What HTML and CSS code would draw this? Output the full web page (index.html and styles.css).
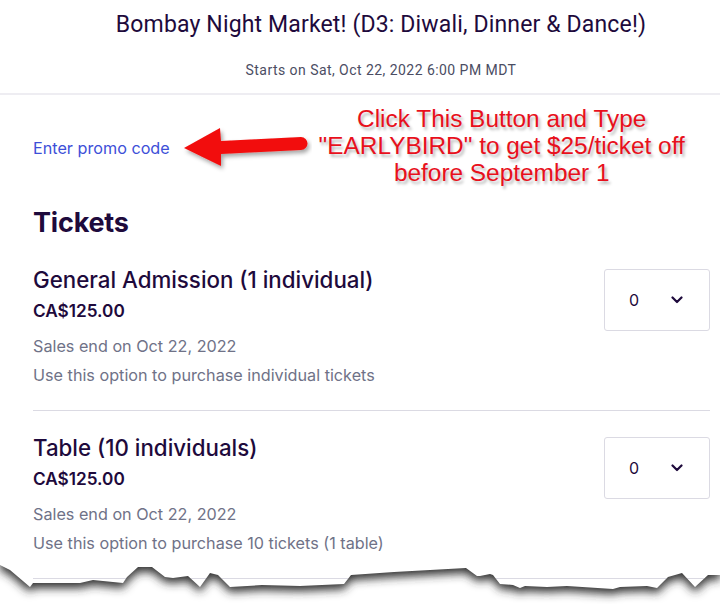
FILE: index.html
```html
<!DOCTYPE html>
<html lang="en">
<head>
<meta charset="utf-8">
<title>Bombay Night Market! - Tickets</title>
<link rel="stylesheet" href="styles.css">
</head>
<body>
<div class="page">
  <header class="event-header">
    <h1 class="event-title">Bombay Night Market! (D3: Diwali, Dinner &amp; Dance!)</h1>
    <p class="event-date">Starts on Sat, Oct 22, 2022 6:00 PM MDT</p>
  </header>

  <main class="content">
    <div class="promo-row">
      <a class="promo-link" href="#">Enter promo code</a>
      <svg class="arrow" width="130" height="50" viewBox="0 0 130 50" aria-hidden="true">
        <defs>
          <filter id="arrowShadow" x="-10%" y="-30%" width="130%" height="170%">
            <feGaussianBlur in="SourceAlpha" stdDeviation="2"/>
            <feOffset dx="2" dy="3" result="b"/>
            <feFlood flood-color="#000" flood-opacity="0.35"/>
            <feComposite in2="b" operator="in"/>
            <feMerge><feMergeNode/><feMergeNode in="SourceGraphic"/></feMerge>
          </filter>
        </defs>
        <g filter="url(#arrowShadow)">
          <path d="M2 25 L38 5 L39 18 L119 14 A6.5 6.5 0 0 1 119 27 L39 31 L39 43 Z" fill="#f20d0d"/>
        </g>
      </svg>
      <p class="annotation">Click This Button and Type<br>"EARLYBIRD" to get $25/ticket off<br>before September 1</p>
    </div>

    <h2 class="tickets-heading">Tickets</h2>

    <ul class="ticket-list">
      <li class="ticket">
        <div class="ticket-info">
          <h3 class="ticket-name">General Admission (1 individual)</h3>
          <p class="ticket-price">CA$125.00</p>
          <p class="ticket-meta ticket-sales">Sales end on Oct 22, 2022</p>
          <p class="ticket-meta ticket-desc">Use this option to purchase individual tickets</p>
        </div>
        <div class="qty-select">
          <span class="qty-value">0</span>
          <svg class="chevron" width="12" height="8" viewBox="0 0 12 8" aria-hidden="true"><path d="M1.5 1.5 L6 6 L10.5 1.5" fill="none" stroke="#1e0a3c" stroke-width="2.2" stroke-linecap="round" stroke-linejoin="round"/></svg>
        </div>
      </li>
      <li class="ticket">
        <div class="ticket-info">
          <h3 class="ticket-name">Table (10 individuals)</h3>
          <p class="ticket-price">CA$125.00</p>
          <p class="ticket-meta ticket-sales">Sales end on Oct 22, 2022</p>
          <p class="ticket-meta ticket-desc">Use this option to purchase 10 tickets (1 table)</p>
        </div>
        <div class="qty-select">
          <span class="qty-value">0</span>
          <svg class="chevron" width="12" height="8" viewBox="0 0 12 8" aria-hidden="true"><path d="M1.5 1.5 L6 6 L10.5 1.5" fill="none" stroke="#1e0a3c" stroke-width="2.2" stroke-linecap="round" stroke-linejoin="round"/></svg>
        </div>
      </li>
    </ul>

    <div class="torn-edge" aria-hidden="true">
      <svg width="720" height="52" viewBox="0 0 720 52">
        <defs>
          <clipPath id="below">
            <path d="M0 11 L10 16 L30 33 L33 29 L80 29 L93 26 L123 29 L127 23 L138 13 L152 13 L165 23 L173 24 L188 22 L200 33 L210 19 L218 21 L230 33 L262 31 L300 32 L344 30 L351 21 L394 18 L430 16 L466 14 L477 22 L480 22 L490 20 L493 21 L500 30 L513 31 L520 34 L525 32 L547 33 L567 32 L613 35 L620 33 L647 32 L657 34 L668 23 L682 19 L695 33 L708 21 L720 21 L720 52 L0 52 Z"/>
          </clipPath>
          <filter id="tearBlur" x="-5%" y="-50%" width="110%" height="200%">
            <feGaussianBlur stdDeviation="5"/>
          </filter>
        </defs>
        <g clip-path="url(#below)">
          <rect x="0" y="0" width="720" height="52" fill="#ffffff"/>
          <path filter="url(#tearBlur)" transform="translate(0 5)" fill="#2e2e2e" d="M0 -20 L0 11 L10 16 L30 33 L33 29 L80 29 L93 26 L123 29 L127 23 L138 13 L152 13 L165 23 L173 24 L188 22 L200 33 L210 19 L218 21 L230 33 L262 31 L300 32 L344 30 L351 21 L394 18 L430 16 L466 14 L477 22 L480 22 L490 20 L493 21 L500 30 L513 31 L520 34 L525 32 L547 33 L567 32 L613 35 L620 33 L647 32 L657 34 L668 23 L682 19 L695 33 L708 21 L720 21 L720 -20 Z"/>
        </g>
      </svg>
    </div>
  </main>
</div>
</body>
</html>
```

FILE: styles.css
```css
* {
  box-sizing: border-box;
}

html, body {
  margin: 0;
  padding: 0;
  background: #ffffff;
}

body {
  font-family: Inter, "Noto Sans", sans-serif;
  color: #1e0a3c;
  overflow: hidden;
}

.page {
  width: 720px;
  height: 604px;
  position: relative;
  overflow: hidden;
}

/* Header */
.event-header {
  height: 95px;
  border-bottom: 2px solid #eeedf2;
  display: flex;
  flex-direction: column;
  align-items: center;
  padding-top: 10px;
  padding-left: 42px;
}

.event-title {
  margin: 0;
  font-family: Roboto, "Liberation Sans", sans-serif;
  font-weight: 400;
  font-size: 23px;
  line-height: 30px;
  letter-spacing: 0.15px;
  color: #1e0a3c;
}

.event-date {
  margin: 21px 0 0;
  font-family: Roboto, "Liberation Sans", sans-serif;
  font-size: 14px;
  line-height: 18px;
  letter-spacing: 0.45px;
  color: #4b4d63;
}

/* Content */
.content {
  padding: 0 11px 0 33px;
}

.promo-row {
  display: flex;
  align-items: center;
  padding-top: 12px;
  height: 93px;
}

.promo-link {
  font-family: Inter, "Noto Sans", sans-serif;
  font-size: 16.2px;
  color: #3d4fd8;
  text-decoration: none;
  white-space: nowrap;
  margin-top: 1px;
}

.arrow {
  margin-left: 12px;
  flex: none;
}

.annotation {
  margin: -4px 0 0 4px;
  font-family: "Liberation Sans", Arial, sans-serif;
  font-size: 24.4px;
  line-height: 27px;
  color: #e8101c;
  text-align: center;
  text-shadow: 2px 3px 3px rgba(0, 0, 0, 0.28);
  white-space: nowrap;
  width: 372px;
}

.tickets-heading {
  margin: 19px 0 0;
  font-family: Inter, "Noto Sans", sans-serif;
  font-size: 27px;
  font-weight: 700;
  line-height: 32px;
  color: #1e0a3c;
  letter-spacing: -0.2px;
}

.ticket-list {
  list-style: none;
  margin: 4px 0 0;
  padding: 0;
}

.ticket {
  display: flex;
  justify-content: space-between;
  align-items: flex-start;
  padding: 25px 0 24px;
  border-bottom: 1px solid #dbdae3;
  margin-right: -1px;
}

.ticket-name {
  margin: 0;
  font-family: Inter, "Noto Sans", sans-serif;
  font-size: 22.3px;
  font-weight: 500;
  line-height: 24px;
  color: #1e0a3c;
}

.ticket-price {
  margin: 8px 0 0;
  font-family: Inter, "Noto Sans", sans-serif;
  font-size: 17.2px;
  font-weight: 600;
  line-height: 22px;
  color: #1e0a3c;
}

.ticket-meta {
  margin: 0;
  font-family: Inter, "Noto Sans", sans-serif;
  font-size: 16.2px;
  line-height: 22px;
  color: #6f7287;
}

.ticket-sales {
  margin-top: 13px;
}

.ticket-desc {
  margin-top: 7px;
}

.qty-select {
  width: 106px;
  height: 62px;
  margin-top: 1px;
  border: 1px solid #dbdae3;
  border-radius: 3px;
  display: flex;
  align-items: center;
  justify-content: space-between;
  padding: 0 26px 0 24px;
  flex: none;
}

.qty-value {
  font-family: Inter, "Noto Sans", sans-serif;
  font-size: 16px;
  color: #1e0a3c;
}

.chevron {
  display: block;
}

/* Torn paper edge overlaying the bottom of the list */
.torn-edge {
  position: absolute;
  left: 0;
  top: 554px;
  width: 720px;
  height: 52px;
}

.torn-edge svg {
  display: block;
}
```
